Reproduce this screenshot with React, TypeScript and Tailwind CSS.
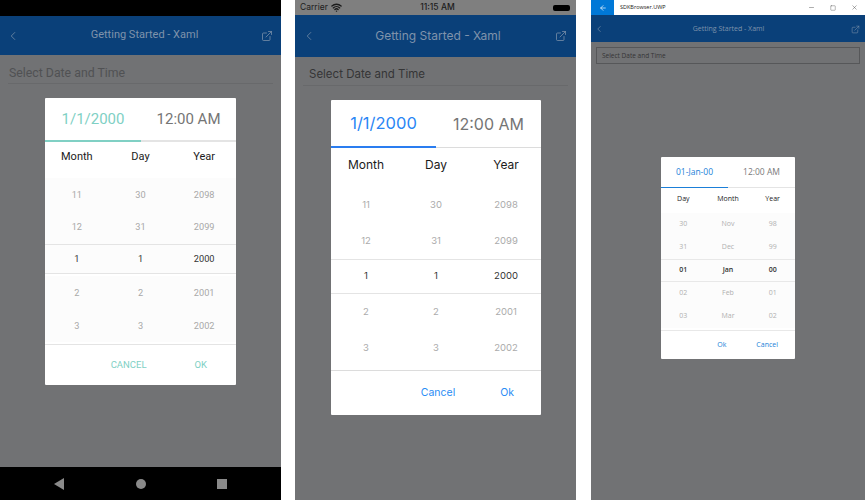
import { ChevronLeft, ExternalLink, ArrowLeft, Minus, Square, X, Wifi } from "lucide-react";

type Wheel = { label: string; items: string[] };

const Android: Wheel[] = [
  { label: "Month", items: ["11", "12", "1", "2", "3"] },
  { label: "Day", items: ["30", "31", "1", "2", "3"] },
  { label: "Year", items: ["2098", "2099", "2000", "2001", "2002"] },
];
const Uwp: Wheel[] = [
  { label: "Day", items: ["30", "31", "01", "02", "03"] },
  { label: "Month", items: ["Nov", "Dec", "Jan", "Feb", "Mar"] },
  { label: "Year", items: ["98", "99", "00", "01", "02"] },
];

function Columns({ wheels, rowClass, headClass, textClass, midClass, midText, dimText }: {
  wheels: Wheel[];
  rowClass: string;
  headClass: string;
  textClass: string;
  midClass: string;
  midText: string;
  dimText: string;
}) {
  return (
    <div className="flex-1 flex flex-col">
      <div className="grid grid-cols-3">
        {wheels.map((w) => (
          <div key={w.label} className={`text-center text-[#1b1b1b] ${headClass}`}>{w.label}</div>
        ))}
      </div>
      <div className="flex flex-col">
        {[0, 1, 2, 3, 4].map((i) => (
          <div key={i} className={`grid grid-cols-3 items-center ${rowClass} ${i === 2 ? midClass : ""}`}>
            {wheels.map((w) => (
              <div key={w.label} className={`text-center ${textClass} ${i === 2 ? midText : dimText}`}>
                {w.items[i]}
              </div>
            ))}
          </div>
        ))}
      </div>
    </div>
  );
}

export default function App() {
  return (
    <div className="w-[865px] h-[500px] bg-white flex overflow-hidden font-['Roboto',sans-serif]">
      {/* ANDROID */}
      <div className="relative w-[281px] h-full flex flex-col bg-[#717274] shrink-0">
        <div className="h-[16px] bg-black" />
        <div className="h-[39px] bg-[#0a4079] flex items-center justify-between pl-[6px] pr-[8px] text-[#7f93ab]">
          <ChevronLeft size={14} strokeWidth={1.25} />
          <span className="text-[11px] ml-[8px]">Getting Started - Xaml</span>
          <ExternalLink size={12} strokeWidth={1.5} />
        </div>
        <div className="flex-1 px-[8px] pt-[9px]">
          <div className="h-[20px] border-b border-[#68696b] pl-[1px] text-[12.3px] leading-[19px] text-[#505153]">Select Date and Time</div>
        </div>
        <div className="h-[33px] bg-black flex items-center justify-between pl-[54px] pr-[54px]">
          <span className="w-0 h-0 border-y-[6px] border-y-transparent border-r-[10px] border-r-[#8a8a8a]" />
          <span className="w-[10px] h-[10px] rounded-full bg-[#8a8a8a]" />
          <span className="w-[10px] h-[10px] bg-[#8a8a8a]" />
        </div>
        <div className="absolute left-[45px] top-[98px] w-[191px] h-[287px] bg-white rounded-[1px] flex flex-col">
          <div className="h-[44px] flex border-b-2 border-[#e4e4e4]">
            <div className="w-[96px] h-[44px] border-b-2 border-[#80d0c4] flex items-center justify-center text-[15px] text-[#80d0c4]">1/1/2000</div>
            <div className="flex-1 flex items-center justify-center text-[15px] text-[#757575]">12:00 AM</div>
          </div>
          <Columns
            wheels={Android}
            headClass="text-[11px] leading-[14px] pt-[8px] pb-[14px]"
            rowClass="h-[32.8px] bg-[#fcfcfc]"
            textClass="text-[9.2px]"
            midClass="h-[30px]! mb-[2.8px] border-y border-[#e4e4e4] bg-[#fafafa]"
            midText="text-[#333333]"
            dimText="text-[#a8a8a8]"
          />
          <div className="h-[41px] border-t border-[#e4e4e4] flex items-center justify-end gap-[48px] pr-[29px] text-[9.5px] text-[#80d0c4]">
            <span>CANCEL</span>
            <span>OK</span>
          </div>
        </div>
      </div>
      <div className="w-[14px] shrink-0" />

      {/* IOS */}
      <div className="relative w-[281px] h-full flex flex-col bg-[#717274] shrink-0 font-['Inter',sans-serif]">
        <div className="h-[15px] bg-[#7f7f7f] flex items-center justify-between pl-[5px] pr-[6px] text-[8.5px] text-[#1c1c1c]">
          <span className="flex items-center gap-[3px]">Carrier <Wifi size={11} strokeWidth={3} /></span>
          <span className="font-medium -ml-[20px]">11:15 AM</span>
          <span className="w-[17px] h-[6px] rounded-[2px] bg-black" />
        </div>
        <div className="h-[42px] bg-[#0a4079] flex items-center justify-between pl-[7px] pr-[9px] text-[#7f93ab]">
          <ChevronLeft size={14} strokeWidth={1.25} />
          <span className="text-[12px] ml-[5px]">Getting Started - Xaml</span>
          <ExternalLink size={12} strokeWidth={1.5} />
        </div>
        <div className="flex-1 px-[8px] pt-[7px]">
          <div className="h-[22px] border-b border-[#68696b] pl-[6px] text-[11.5px] leading-[20px] text-[#353536]">Select Date and Time</div>
        </div>
        <div className="absolute left-[36px] top-[100px] w-[210px] h-[315px] bg-white rounded-[1px] flex flex-col">
          <div className="h-[48px] flex border-b border-[#dcdcdc]">
            <div className="w-[105px] h-[48px] border-b-2 border-[#2a7df0] flex items-center justify-center text-[16.5px] text-[#2a86f5]">1/1/2000</div>
            <div className="flex-1 flex items-center justify-center text-[16px] text-[#757575]">12:00 AM</div>
          </div>
          <Columns
            wheels={Android}
            headClass="text-[12px] leading-[14px] pt-[10px] pb-[15px]"
            rowClass="h-[35.8px]"
            textClass="text-[9.5px]"
            midClass="border-y border-[#e4e4e4]"
            midText="text-[#333333]"
            dimText="text-[#ababab]"
          />
          <div className="h-[45px] border-t border-[#dcdcdc] flex items-center justify-end gap-[45px] pr-[27px] text-[10.5px] text-[#2a8cf5]">
            <span>Cancel</span>
            <span>Ok</span>
          </div>
        </div>
      </div>
      <div className="w-[15px] shrink-0" />

      {/* UWP */}
      <div className="relative flex-1 h-full flex flex-col bg-[#717274] font-['Open_Sans',sans-serif]">
        <div className="h-[15px] bg-white flex items-center text-[5.5px] text-[#222222]">
          <div className="w-[23px] h-full bg-[#0078d7] flex items-center justify-center text-white">
            <ArrowLeft size={8} strokeWidth={2} />
          </div>
          <span className="ml-[6px]">SDKBrowser.UWP</span>
          <div className="ml-auto flex items-center gap-[15px] pr-[7px] text-[#444444]">
            <Minus size={7} strokeWidth={1.5} />
            <Square size={6} strokeWidth={1.5} />
            <X size={7} strokeWidth={1.5} />
          </div>
        </div>
        <div className="h-[27px] pt-[1px] bg-[#0a4079] flex items-center justify-between pl-[3px] pr-[5px] text-[#7f93ab]">
          <ChevronLeft size={10} strokeWidth={1.5} />
          <span className="text-[7px] ml-[2px]">Getting Started - Xaml</span>
          <ExternalLink size={9} strokeWidth={1.5} />
        </div>
        <div className="flex-1 px-[5px] pt-[5px]">
          <div className="h-[17px] border border-[#565759] pl-[5px] text-[6.5px] leading-[15px] text-[#353536]">Select Date and Time</div>
        </div>
        <div className="absolute left-[70px] top-[157px] w-[134px] h-[202px] bg-white rounded-[1px] flex flex-col">
          <div className="h-[31px] flex border-b border-[#e4e4e4]">
            <div className="w-[67px] h-[31px] border-b border-[#1b7fd8] flex items-center justify-center text-[8.5px] text-[#1b7fd8]">01-Jan-00</div>
            <div className="flex-1 flex items-center justify-center text-[8.5px] text-[#7a7a7a]">12:00 AM</div>
          </div>
          <Columns
            wheels={Uwp}
            headClass="text-[7px] leading-[10px] pt-[6px] pb-[9px]"
            rowClass="h-[23px] bg-[#fcfcfc]"
            textClass="text-[7px]"
            midClass="border-y border-[#e8e8e8] bg-[#fafafa]"
            midText="text-[#333333] font-semibold"
            dimText="text-[#b0b0b0]"
          />
          <div className="h-[29px] border-t border-[#e8e8e8] flex items-center justify-end gap-[30px] pr-[17px] text-[7px] text-[#1b7fd8]">
            <span>Ok</span>
            <span>Cancel</span>
          </div>
        </div>
      </div>
    </div>
  );
}
